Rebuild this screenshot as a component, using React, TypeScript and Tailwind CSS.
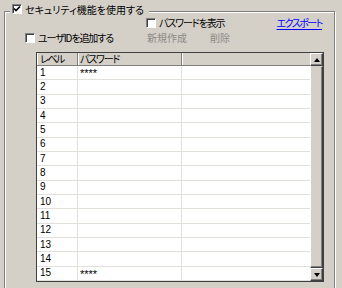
import React from 'react';

const rows = Array.from({ length: 15 }, (_, i) => ({
    level: i + 1,
    password: i === 0 || i === 14 ? '****' : '',
}));

function CheckBox({ checked }: { checked?: boolean }) {
    return (
        <span className="w-[10px] h-[10px] shrink-0 flex items-center justify-center bg-white border border-t-[#808080] border-l-[#808080] border-b-white border-r-white shadow-[inset_1px_1px_0_#404040]">
            {checked && (
                <svg width="8" height="8" viewBox="0 0 8 8">
                    <path d="M1 3.5 L3 5.5 L7 1.5" fill="none" stroke="#000" strokeWidth="1.6" />
                </svg>
            )}
        </span>
    );
}

function ScrollButton({ up }: { up?: boolean }) {
    return (
        <div className="h-[13px] flex items-center justify-center bg-[#d4d0c8] border border-t-white border-l-white border-b-[#404040] border-r-[#404040] shadow-[inset_-1px_-1px_0_#808080]">
            <svg width="6" height="4" viewBox="0 0 6 4">
                <path d={up ? 'M0 4 L6 4 L3 0 Z' : 'M0 0 L6 0 L3 4 Z'} fill="#000" />
            </svg>
        </div>
    );
}

export default function App() {
    return (
        <div className="w-[342px] h-[288px] overflow-hidden bg-[#d4d0c8] text-black text-[10px] leading-none font-['Noto_Sans_CJK_JP','Noto_Sans',sans-serif] [font-feature-settings:'palt']">
            {/* Group box */}
            <fieldset className="ml-[4px] mt-[4px] w-[331px] h-[300px] border border-[#808080] shadow-[inset_1px_1px_0_#fff,1px_1px_0_#fff]">
                <legend className="ml-[5px] px-[2px] h-[15px] bg-[#d4d0c8] flex items-start gap-[3px]">
                    <CheckBox checked />
                    <span className="pt-[1px] pr-[3px]">セキュリティ機能を使用する</span>
                </legend>

                {/* Options row 1 */}
                <div className="-mt-[1px] h-[10px] flex items-center">
                    <div className="ml-[141px] flex items-center gap-[3px]">
                        <CheckBox />
                        <span className="tracking-[-1.1px]">パスワードを表示</span>
                    </div>
                    <a href="#" className="ml-auto mr-[12px] tracking-[-1.5px] text-[#0000ff] underline underline-offset-[2px]">エクスポート</a>
                </div>

                {/* Options row 2 */}
                <div className="mt-[4px] h-[11px] flex items-center">
                    <div className="ml-[20px] w-[122px] flex items-center gap-[3px]">
                        <CheckBox />
                        <span className="tracking-[-1.1px]">ユーザIDを追加する</span>
                    </div>
                    <span className="w-[63px] text-[#8c8a86]">新規作成</span>
                    <span className="text-[#8c8a86]">削除</span>
                </div>

                {/* Table */}
                <div className="mt-[9px] ml-[31px] w-[288px] h-[230px] flex bg-white border border-[#404040]">
                    <div className="flex-1 flex flex-col">
                        <div className="h-[13px] flex bg-[#d4d0c8] border-b border-[#808080]">
                            <div className="w-[41px] pl-[3px] flex items-center tracking-[-1.5px] border-r border-[#808080] shadow-[inset_1px_0_0_#fff]">レベル</div>
                            <div className="w-[104px] pl-[2px] flex items-center tracking-[-1.2px] border-r border-[#808080] shadow-[inset_1px_0_0_#fff]">パスワード</div>
                            <div className="flex-1 shadow-[inset_1px_0_0_#fff]" />
                        </div>
                        {rows.map((row) => (
                            <div key={row.level} className="h-[14.333px] flex border-b border-[#e2e0da]">
                                <div className="w-[41px] pl-[3px] flex items-center border-r border-[#e2e0da] font-['Liberation_Sans',sans-serif] text-[10px]">
                                    {row.level}
                                </div>
                                <div className="w-[104px] pl-[2px] pt-[2px] flex items-center border-r border-[#e2e0da] font-['Liberation_Sans',sans-serif] text-[11px]">
                                    {row.password}
                                </div>
                                <div className="flex-1" />
                            </div>
                        ))}
                    </div>

                    {/* Scroll bar */}
                    <div className="w-[13px] flex flex-col">
                        <ScrollButton up />
                        <div className="flex-1 bg-[#d4d0c8] border border-t-[#d4d0c8] border-l-white border-b-[#404040] border-r-[#404040] shadow-[inset_-1px_-1px_0_#808080]" />
                        <ScrollButton />
                    </div>
                </div>
            </fieldset>
        </div>
    );
}
